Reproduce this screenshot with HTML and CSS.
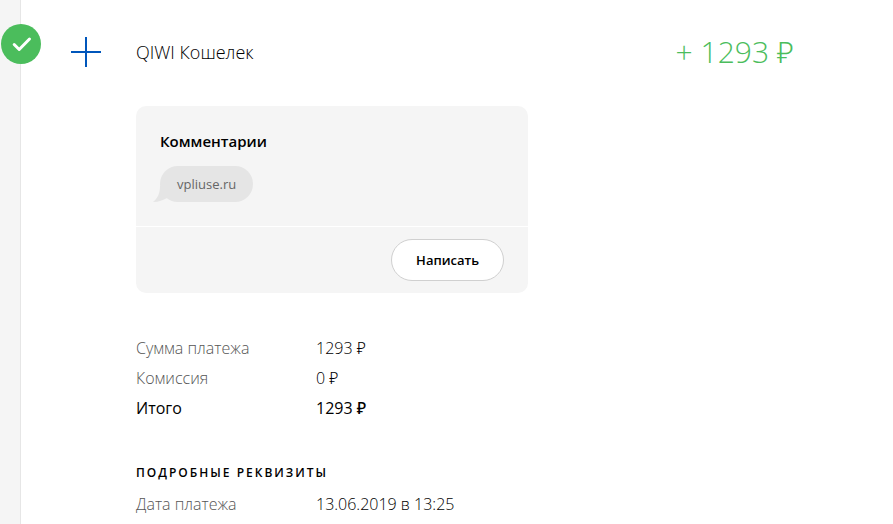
FILE: index.html
```
<!DOCTYPE html>
<html lang="ru">
<head>
    <meta charset="utf-8">
    <title>QIWI Кошелек</title>
    <link rel="stylesheet" href="styles.css">
</head>
<body>
<main class="payment">
    <svg class="status" viewBox="0 0 40 40" role="img" aria-label="Успешно">
        <circle cx="20" cy="20" r="20" fill="#4bbd5c"/>
        <path d="M13.2 20.5l5 5L28.5 15" fill="none" stroke="#fff" stroke-width="3" stroke-linecap="round" stroke-linejoin="round"/>
    </svg>

    <header class="payment-head">
        <svg class="plus" viewBox="0 0 30 30" aria-hidden="true">
            <path d="M15 0v30M0 15h30" stroke="#0056bb" stroke-width="2"/>
        </svg>
        <h1>QIWI Кошелек</h1>
        <div class="amount">+ 1293 ₽</div>
    </header>

    <div class="payment-body">
        <section class="comments">
            <div class="comments-list">
                <h2>Комментарии</h2>
                <div class="bubble">
                    <svg class="tail" viewBox="0 0 20 16" aria-hidden="true">
                        <path d="M7 0C7 7 5 12 0 16C6 16 10 14 14 12L20 6V0z" fill="#e5e5e5"/>
                    </svg>
                    <span>vpliuse.ru</span>
                </div>
            </div>
            <div class="comments-actions">
                <button type="button">Написать</button>
            </div>
        </section>

        <table class="details">
            <tr><th scope="row">Сумма платежа</th><td>1293 ₽</td></tr>
            <tr><th scope="row">Комиссия</th><td>0 ₽</td></tr>
            <tr class="total"><th scope="row">Итого</th><td>1293 ₽</td></tr>
        </table>

        <h3>Подробные реквизиты</h3>
        <table class="details">
            <tr><th scope="row">Дата платежа</th><td>13.06.2019 в 13:25</td></tr>
        </table>
    </div>
</main>
</body>
</html>
```
FILE: styles.css
```
html,body{
    margin: 0;
    padding: 0;
}

body{
    background: #f5f5f5;
    color: #000;
    font-family: "Open Sans", "Noto Sans", sans-serif;
    font-size: 16px;
    line-height: 20px;
}

h1,h2,h3{
    margin: 0;
}

.payment{
    position: relative;
    box-sizing: border-box;
    min-height: 100vh;
    margin-left: 20px;
    padding: 32px 99px 0 50px;
    border-left: 1px solid #e6e6e6;
    background: #fff;
}

/* sits on the edge of the card */
.status{
    position: absolute;
    top: 24px;
    left: -20px;
    width: 40px;
    height: 40px;
}

.payment-head{
    display: flex;
    align-items: center;
    height: 40px;
}

.plus{
    width: 30px;
    height: 30px;
    margin-right: 35px;
}

.payment-head h1{
    flex: 1;
    font-size: 18px;
    font-weight: 300;
}

.amount{
    color: #4bbd5c;
    font-size: 30px;
    font-weight: 300;
}

.payment-body{
    padding: 34px 0 0 65px;
}

.comments{
    max-width: 392px;
    margin-bottom: 40px;
    border-radius: 10px;
    background: #f5f5f5;
}

.comments-list{
    padding: 24px;
    border-bottom: 1px solid #fff;
}

.comments h2{
    margin-bottom: 14px;
    font-size: 15px;
    font-weight: 600;
    line-height: 22px;
}

.bubble{
    position: relative;
    width: fit-content;
    padding: 8px 17px;
    border-radius: 18px;
    background: #e5e5e5;
    color: #666;
    font-size: 13px;
}

.bubble span{
    position: relative;
}

.tail{
    position: absolute;
    bottom: 0;
    left: -7px;
    width: 20px;
    height: 16px;
}

.comments-actions{
    display: flex;
    justify-content: flex-end;
    padding: 12px 24px;
}

button{
    height: 42px;
    padding: 0 24px;
    border: 1px solid #d0d0d0;
    border-radius: 21px;
    background: #fff;
    color: #000;
    font-family: inherit;
    font-size: 13px;
    font-weight: 600;
}

.details{
    border-spacing: 0;
    font-weight: 300;
}

.details th,
.details td{
    height: 30px;
    padding: 0;
    font-weight: inherit;
    text-align: left;
}

.details th{
    width: 180px;
    color: #555;
}

.details .total{
    font-weight: 500;
}

.details .total th{
    color: #000;
}

h3{
    margin: 40px 0 6px;
    font-size: 12px;
    font-weight: 600;
    letter-spacing: 2px;
    text-transform: uppercase;
}
```
